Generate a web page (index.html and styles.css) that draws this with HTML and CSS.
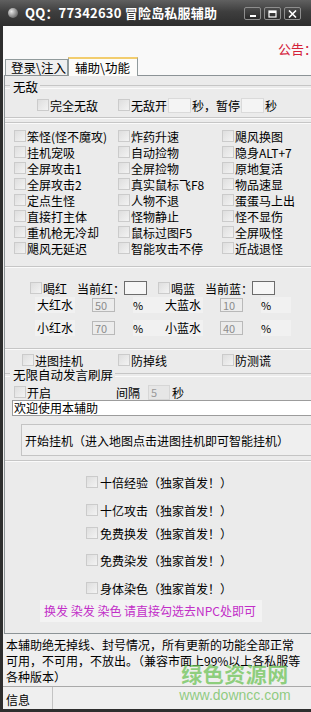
FILE: index.html
```html
<!DOCTYPE html>
<html lang="zh-CN">
  <head>
    <meta charset="UTF-8" />
    <title>冒险岛私服辅助</title>
    <link rel="stylesheet" href="styles.css">
  </head>
  <body>
    <div class="window">
      <div class="titlebar">
        <span class="app-icon"></span>
        <span class="title">QQ：77342630 冒险岛私服辅助</span>
        <div class="win-btns">
          <span class="wb"><svg width="8" height="8"><rect x="1" y="5" width="6" height="2" fill="#fff"/></svg></span>
          <span class="wb"><svg width="9" height="8"><rect x="1" y="1" width="7" height="6" fill="none" stroke="#fff" stroke-width="1.2"/><rect x="1" y="1" width="7" height="2" fill="#fff"/></svg></span>
          <span class="wb"><svg width="9" height="8"><path d="M1 0.5 L8 7.5 M8 0.5 L1 7.5" stroke="#fff" stroke-width="1.6"/></svg></span>
        </div>
      </div>

      <div class="frame">
        <div class="client">
          <div class="notice-bar"><span class="notice">公告：欢迎使用</span></div>
          <div class="tabs">
            <span class="tab">登录\注入</span>
            <span class="tab active">辅助\功能</span>
          </div>

          <div class="panel">
            <!-- 无敌 -->
            <div class="grp-title t-wudi"><span>无敌</span></div>
            <div class="row wudi-row">
              <label class="chk c-full"><span class="cb"></span>完全无敌</label>
              <label class="chk"><span class="cb"></span>无敌开</label>
              <span class="edit e-wudi"></span>
              <span>秒，暂停</span>
              <span class="edit e-wudi"></span>
              <span>秒</span>
            </div>
            <div class="sep s1"></div>
            <div class="sep s2"></div>

            <!-- 功能 -->
            <div class="grid">
              <label class="chk"><span class="cb"></span>笨怪(怪不魔攻)</label>
              <label class="chk"><span class="cb"></span>炸药升速</label>
              <label class="chk"><span class="cb"></span>飓风换图</label>
              <label class="chk"><span class="cb"></span>挂机宠吸</label>
              <label class="chk"><span class="cb"></span>自动捡物</label>
              <label class="chk"><span class="cb"></span>隐身ALT+7</label>
              <label class="chk"><span class="cb"></span>全屏攻击1</label>
              <label class="chk"><span class="cb"></span>全屏捡物</label>
              <label class="chk"><span class="cb"></span>原地复活</label>
              <label class="chk"><span class="cb"></span>全屏攻击2</label>
              <label class="chk"><span class="cb"></span>真实鼠标飞F8</label>
              <label class="chk"><span class="cb"></span>物品速显</label>
              <label class="chk"><span class="cb"></span>定点生怪</label>
              <label class="chk"><span class="cb"></span>人物不退</label>
              <label class="chk"><span class="cb"></span>蛋蛋马上出</label>
              <label class="chk"><span class="cb"></span>直接打主体</label>
              <label class="chk"><span class="cb"></span>怪物静止</label>
              <label class="chk"><span class="cb"></span>怪不显伤</label>
              <label class="chk"><span class="cb"></span>重机枪无冷却</label>
              <label class="chk"><span class="cb"></span>鼠标过图F5</label>
              <label class="chk"><span class="cb"></span>全屏吸怪</label>
              <label class="chk"><span class="cb"></span>飓风无延迟</label>
              <label class="chk"><span class="cb"></span>智能攻击不停</label>
              <label class="chk"><span class="cb"></span>近战退怪</label>
            </div>
            <div class="sep s3"></div>

            <!-- 吃药 -->
            <div class="row potion-top">
              <label class="chk c-hp"><span class="cb"></span>喝红</label>
              <span class="cur-lbl">当前红：</span>
              <span class="edit e-cur"></span>
              <label class="chk c-mp"><span class="cb"></span>喝蓝</label>
              <span class="cur-lbl">当前蓝：</span>
              <span class="edit e-cur"></span>
            </div>
            <div class="row potion p1">
              <span class="pl">大红水</span><span class="edit e-num">50</span><span class="pct">%</span>
              <span class="pl">大蓝水</span><span class="edit e-num">10</span><span class="pct">%</span>
            </div>
            <div class="row potion p2">
              <span class="pl">小红水</span><span class="edit e-num">70</span><span class="pct">%</span>
              <span class="pl">小蓝水</span><span class="edit e-num">40</span><span class="pct">%</span>
            </div>
            <div class="sep s4"></div>

            <div class="grid guard">
              <label class="chk"><span class="cb"></span>进图挂机</label>
              <label class="chk"><span class="cb"></span>防掉线</label>
              <label class="chk"><span class="cb"></span>防测谎</label>
            </div>

            <!-- 刷屏 -->
            <div class="grp-title t-spam"><span>无限自动发言刷屏</span></div>
            <div class="row spam-row">
              <label class="chk c-open"><span class="cb"></span>开启</label>
              <span>间隔</span>
              <span class="edit e-gap">5</span>
              <span>秒</span>
            </div>
            <div class="text-input">欢迎使用本辅助</div>
            <div class="big-btn">开始挂机（进入地图点击进图挂机即可智能挂机）</div>
            <div class="sep s5"></div>

            <!-- 独家 -->
            <div class="excl">
              <label class="chk x1"><span class="cb"></span>十倍经验（独家首发！）</label>
              <label class="chk x2"><span class="cb"></span>十亿攻击（独家首发！）</label>
              <label class="chk x3"><span class="cb"></span>免费换发（独家首发！）</label>
              <label class="chk x4"><span class="cb"></span>免费染发（独家首发！）</label>
              <label class="chk x5"><span class="cb"></span>身体染色（独家首发！）</label>
            </div>
            <div class="hint">换发 染发 染色 请直接勾选去NPC处即可</div>
          </div>

          <div class="memo">
            本辅助绝无掉线、封号情况，所有更新的功能全部正常<br>
            可用，不可用，不放出。（兼容市面上99%以上各私服等<br>
            各种版本）
          </div>
          <div class="status">
            <span class="st-cell">信息</span>
            <span class="st-cell st-rest"></span>
          </div>
        </div>
      </div>

      <div class="watermark">
        <div class="wm-cn">绿色资源网</div>
        <div class="wm-url">www.downcc.com</div>
      </div>
    </div>
  </body>
</html>
```

FILE: styles.css
```css
* {
  box-sizing: border-box;
}

body {
  margin: 0;
  font-family: "Noto Sans CJK SC", "Noto Sans", sans-serif;
  font-size: 12px;
  color: #000;
  background: #2c2c2c;
}

/* 窗口外框 */
.window {
  position: relative;
  width: 311px;
  height: 712px;
  background: #2e2e2e;
  display: flex;
  flex-direction: column;
  overflow: hidden;
}

.titlebar {
  height: 26px;
  flex: none;
  display: flex;
  align-items: center;
  padding: 0 0 0 8px;
  background: linear-gradient(#606060, #3e3e3e 45%, #2e2e2e);
  color: #fff;
}

.app-icon {
  width: 10px;
  height: 10px;
  border-radius: 50%;
  background: radial-gradient(circle at 35% 35%, #e8e8e8, #8a8a8a 55%, #444);
}

.title {
  margin-left: 7px;
  font-weight: bold;
  font-size: 13px;
  line-height: 14px;
  letter-spacing: 0.2px;
}

.win-btns {
  margin-left: auto;
  margin-right: 10px;
  display: flex;
  gap: 3px;
  padding-top: 1px;
}

.wb {
  width: 17px;
  height: 13px;
  border: 1px solid #8e8e8e;
  border-radius: 2px;
  background: linear-gradient(#4c4c4c, #2a2a2a);
  display: flex;
  align-items: center;
  justify-content: center;
}

.frame {
  flex: 1;
  padding: 0 5px 3px 3px;
  display: flex;
}

.client {
  flex: 1;
  display: flex;
  flex-direction: column;
  background: #ececec;
}

/* 公告 + 标签 */
.notice-bar {
  height: 32px;
  flex: none;
  background: #f9f9f9;
  padding: 14px 0 0 275px;
  white-space: nowrap;
  overflow: hidden;
}

.notice {
  color: #d4213a;
  font-size: 13px;
  line-height: 14px;
}

.tabs {
  height: 17px;
  flex: none;
  display: flex;
  align-items: flex-end;
  padding-left: 2px;
  background: #f9f9f9;
  position: relative;
  z-index: 1;
}

.tab {
  height: 16px;
  width: 63px;
  border: 1px solid #919b9c;
  border-bottom: none;
  background: #efefef;
  padding-left: 5px;
  line-height: 15px;
  font-size: 12.5px;
}

.tab.active {
  width: 70px;
  height: 19px;
  margin-bottom: -1px;
  background: #fcfcfa;
  border-top: 2px solid #f2cd6e;
  padding-left: 6px;
  line-height: 17px;
}

.panel {
  height: 559px;
  flex: none;
  margin-left: 1px;
  border: 1px solid #8c9396;
  background: #ebebeb;
  display: flex;
  flex-direction: column;
}

/* 通用行 */
.row {
  display: flex;
  align-items: center;
  white-space: nowrap;
}

.chk {
  display: flex;
  align-items: center;
  white-space: nowrap;
}

.cb {
  width: 12px;
  height: 12px;
  flex: none;
  margin-right: 1px;
  border: 1px solid #cbcbcb;
  background: linear-gradient(135deg, #dedede, #f3f3f3);
}

.edit {
  height: 15px;
  flex: none;
  display: flex;
  align-items: center;
  padding-left: 2px;
  font-size: 11px;
  color: #8c8c8c;
}

/* 分组标题、分隔线 */
.grp-title {
  height: 14px;
  display: flex;
  align-items: center;
  line-height: 14px;
}

.grp-title::before,
.grp-title::after {
  content: "";
  height: 2px;
  border-top: 1px solid #c6c6c6;
  border-bottom: 1px solid #fafafa;
}

.grp-title::before {
  width: 5px;
  margin-right: 3px;
}

.grp-title::after {
  flex: 1;
  margin-left: 2px;
}

.sep {
  height: 2px;
  border-top: 1px solid #c6c6c6;
  border-bottom: 1px solid #fafafa;
}

.t-wudi {
  margin-top: 4px;
  font-size: 12.5px;
}

.wudi-row {
  margin-top: 4px;
  height: 14px;
  padding-left: 32px;
}

.c-full {
  width: 81px;
}

.e-wudi {
  width: 23px;
  background: #f4f4f4;
  border: 1px solid #dadada;
  margin: 0 1px;
}

.s1 { margin-top: 5px; }
.s2 { margin-top: 3px; }

.grid {
  margin-top: 4px;
  display: grid;
  grid-template-columns: 104px 104px auto;
  grid-auto-rows: 16px;
  padding-left: 9px;
}

.s3 { margin-top: 10px; }

/* 吃药 */
.potion-top {
  margin-top: 12px;
  height: 16px;
  padding-left: 25px;
}

.c-hp,
.c-mp {
  width: 47px;
}

.c-mp {
  margin-left: 11px;
}

.cur-lbl {
  width: 47px;
}

.e-cur {
  width: 23px;
  height: 14px;
  border: 1px solid #6c6c6c;
  background: #f6f6f6;
}

.potion {
  height: 16px;
  padding-left: 30px;
}

.p1 { margin-top: 1px; }
.p2 { margin-top: 7px; }

.pl {
  width: 40px;
  background: #f1f1f1;
  text-align: center;
  line-height: 16px;
  margin-right: 17px;
}

.pl + .edit + .pct + .pl {
  margin-left: 0;
}

.e-num {
  width: 23px;
  height: 14px;
  border: 1px solid #b9b9b9;
  background: #ececec;
}

.pct {
  width: 30px;
  margin-left: 18px;
  font-size: 11px;
  line-height: 16px;
  background: #f1f1f1;
  text-align: left;
  padding-left: 0;
  margin-right: 0;
}

.potion .pct:nth-of-type(3) {
  margin-right: 0;
}

.s4 { margin-top: 12px; }

.guard {
  margin-top: 2px;
  padding-left: 17px;
  grid-template-columns: 96px 104px auto;
}

.t-spam {
  font-size: 12.5px;
}

.spam-row {
  margin-top: 2px;
  height: 16px;
  padding-left: 9px;
}

.c-open {
  width: 102px;
}

.e-gap {
  width: 22px;
  margin: 0 2px 0 8px;
  border: 1px solid #d6d6d6;
  background: #e6e6e6;
  color: #999;
}

.text-input {
  height: 16px;
  margin: 0 4px 0 7px;
  border: 1px solid #9c9c9c;
  background: #fff;
  padding-left: 1px;
  line-height: 14px;
}

.big-btn {
  height: 32px;
  margin: 8px 12px 0 16px;
  border: 1px solid #c4c4c4;
  background: #efefef;
  padding-left: 3px;
  line-height: 31px;
  white-space: nowrap;
}

.s5 { margin-top: 4px; }

/* 独家功能 */
.excl {
  display: flex;
  flex-direction: column;
  padding-left: 81px;
}

.excl .chk {
  height: 16px;
}

.excl .cb {
  margin-right: 2px;
}

.x1 { margin-top: 12px; }
.x2 { margin-top: 12px; }
.x3 { margin-top: 7px; }
.x4 { margin-top: 11px; }
.x5 { margin-top: 12px; }

.hint {
  margin: 4px 0 0 35px;
  width: 222px;
  height: 22px;
  background: #f3f3f3;
  color: #c22fc8;
  padding-left: 4px;
  line-height: 22px;
  white-space: nowrap;
}

/* 说明、状态栏 */
.memo {
  height: 52px;
  flex: none;
  padding: 3px 0 0 3px;
  line-height: 16px;
  white-space: nowrap;
  background: #efefef;
}

.status {
  flex: 1;
  display: flex;
  border-top: 1px solid #a9a9a9;
  background: #efefef;
}

.st-cell {
  padding: 4px 0 0 3px;
  width: 50px;
  border-right: 1px solid #c3c3c3;
}

.st-rest {
  flex: 1;
  border-right: none;
}

/* 水印 */
.watermark {
  position: absolute;
  left: 178px;
  top: 659px;
  width: 114px;
  text-align: center;
  pointer-events: none;
}

.wm-cn {
  color: rgba(110, 196, 88, 0.75);
  font-weight: bold;
  font-size: 21px;
  line-height: 28px;
  letter-spacing: 0.5px;
}

.wm-url {
  color: rgba(110, 190, 90, 0.75);
  font-family: "Liberation Sans", sans-serif;
  font-size: 14px;
  line-height: 16px;
}
```
